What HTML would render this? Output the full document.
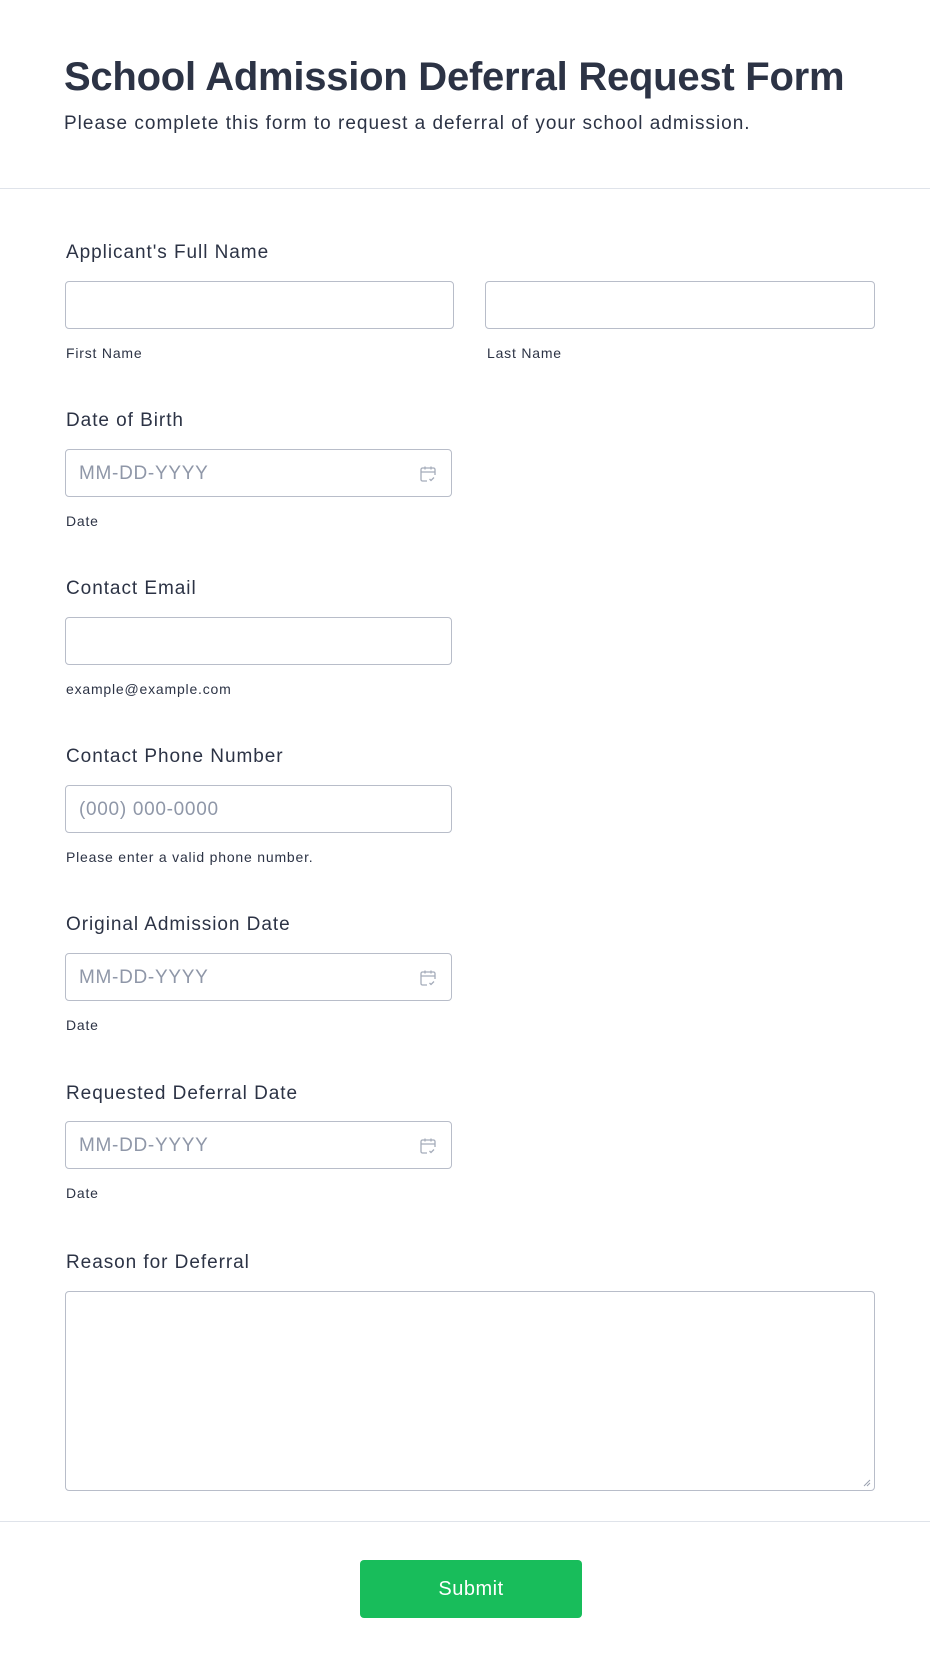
<!DOCTYPE html>
<html><head><meta charset="utf-8"><style>
*{box-sizing:border-box;margin:0;padding:0}
body{width:930px;height:1668px;background:#fff;font-family:"Liberation Sans",sans-serif;color:#2c3345;position:relative;overflow:hidden}
.a{position:absolute}
h1{position:absolute;left:64px;top:55px;font-size:40px;font-weight:bold;letter-spacing:-0.25px;white-space:nowrap}
.sub{left:64px;top:113px;font-size:19px;letter-spacing:1px;white-space:nowrap}
.hr{left:0;width:930px;height:1px;background:#dfe3ea}
.lab{left:66px;font-size:19px;letter-spacing:0.95px;white-space:nowrap}
.sl{font-size:14px;letter-spacing:0.8px;white-space:nowrap}
.in{border:1px solid #b8bdc9;border-radius:4px;height:48px;background:#fff}
.ph{left:13px;top:13px;font-size:19px;color:#8f97a8;position:absolute;letter-spacing:0.7px}
.ic{position:absolute;right:13px;top:14px}
</style></head><body>
<h1>School Admission Deferral Request Form</h1>
<div class="a sub">Please complete this form to request a deferral of your school admission.</div>
<div class="a hr" style="top:188px"></div>

<div class="a lab" style="top:242px">Applicant's Full Name</div>
<div class="a in" style="left:65px;top:281px;width:389px"></div>
<div class="a in" style="left:485px;top:281px;width:390px"></div>
<div class="a sl" style="left:66px;top:345px">First Name</div>
<div class="a sl" style="left:487px;top:345px">Last Name</div>

<div class="a lab" style="top:410px">Date of Birth</div>
<div class="a in" style="left:65px;top:449px;width:387px"><span class="ph">MM-DD-YYYY</span>
<svg class="ic" width="20" height="20" viewBox="0 0 20 20" fill="none" stroke="#a5acba" stroke-width="1.3"><path d="M9 17H4.5A1.5 1.5 0 0 1 3 15.5V5.5A1.5 1.5 0 0 1 4.5 4h11A1.5 1.5 0 0 1 17 5.5V11M3 8h14M7 2.5v3M13 2.5v3M11.5 15l1.5 1.5 3-3"/></svg></div>
<div class="a sl" style="left:66px;top:513px">Date</div>

<div class="a lab" style="top:578px">Contact Email</div>
<div class="a in" style="left:65px;top:617px;width:387px"></div>
<div class="a sl" style="left:66px;top:681px">example@example.com</div>

<div class="a lab" style="top:746px">Contact Phone Number</div>
<div class="a in" style="left:65px;top:785px;width:387px"><span class="ph">(000) 000-0000</span></div>
<div class="a sl" style="left:66px;top:849px">Please enter a valid phone number.</div>

<div class="a lab" style="top:914px">Original Admission Date</div>
<div class="a in" style="left:65px;top:953px;width:387px"><span class="ph">MM-DD-YYYY</span>
<svg class="ic" width="20" height="20" viewBox="0 0 20 20" fill="none" stroke="#a5acba" stroke-width="1.3"><path d="M9 17H4.5A1.5 1.5 0 0 1 3 15.5V5.5A1.5 1.5 0 0 1 4.5 4h11A1.5 1.5 0 0 1 17 5.5V11M3 8h14M7 2.5v3M13 2.5v3M11.5 15l1.5 1.5 3-3"/></svg></div>
<div class="a sl" style="left:66px;top:1017px">Date</div>

<div class="a lab" style="top:1083px">Requested Deferral Date</div>
<div class="a in" style="left:65px;top:1121px;width:387px"><span class="ph">MM-DD-YYYY</span>
<svg class="ic" width="20" height="20" viewBox="0 0 20 20" fill="none" stroke="#a5acba" stroke-width="1.3"><path d="M9 17H4.5A1.5 1.5 0 0 1 3 15.5V5.5A1.5 1.5 0 0 1 4.5 4h11A1.5 1.5 0 0 1 17 5.5V11M3 8h14M7 2.5v3M13 2.5v3M11.5 15l1.5 1.5 3-3"/></svg></div>
<div class="a sl" style="left:66px;top:1185px">Date</div>

<div class="a lab" style="top:1252px">Reason for Deferral</div>
<div class="a in" style="left:65px;top:1291px;width:810px;height:200px">
<svg style="position:absolute;right:3px;bottom:3px" width="9" height="9" viewBox="0 0 9 9" stroke="#9aa1b0" stroke-width="1"><path d="M8 2L2 8M8 5L5 8"/></svg></div>

<div class="a hr" style="top:1521px"></div>
<div class="a" style="left:360px;top:1560px;width:222px;height:58px;background:#18bd5b;border-radius:4px;color:#fff;font-size:20px;text-align:center;line-height:58px;letter-spacing:0.5px">Submit</div>
</body></html>
